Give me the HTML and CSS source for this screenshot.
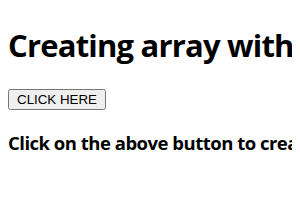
FILE: index.html
```html
<!DOCTYPE html>
<html lang="en">
<head>
    <meta charset="UTF-8">
    <title>Creating array</title>
    <link rel="stylesheet" href="styles.css">
</head>
<body>
    <h1 class="title">Creating array with JavaScript</h1>
    <button class="btn">CLICK HERE</button>
    <h3 class="note">Click on the above button to create an array</h3>
</body>
</html>
```

FILE: styles.css
```css
body {
    font-family: 'Open Sans', 'Noto Sans', sans-serif;
    color: #000;
    background: #fff;
    white-space: nowrap;
    overflow: hidden;
}

.title {
    font-size: 31px;
    font-weight: bold;
    letter-spacing: -0.8px;
    margin: 16px 0 21px;
}

.btn {
    font-family: 'Liberation Sans', Arial, sans-serif;
    font-size: 13.33px;
    padding: 1px 7px;
}

.note {
    font-size: 18.5px;
    font-weight: bold;
    letter-spacing: -0.5px;
    margin: 20px 0 18px;
}
```
